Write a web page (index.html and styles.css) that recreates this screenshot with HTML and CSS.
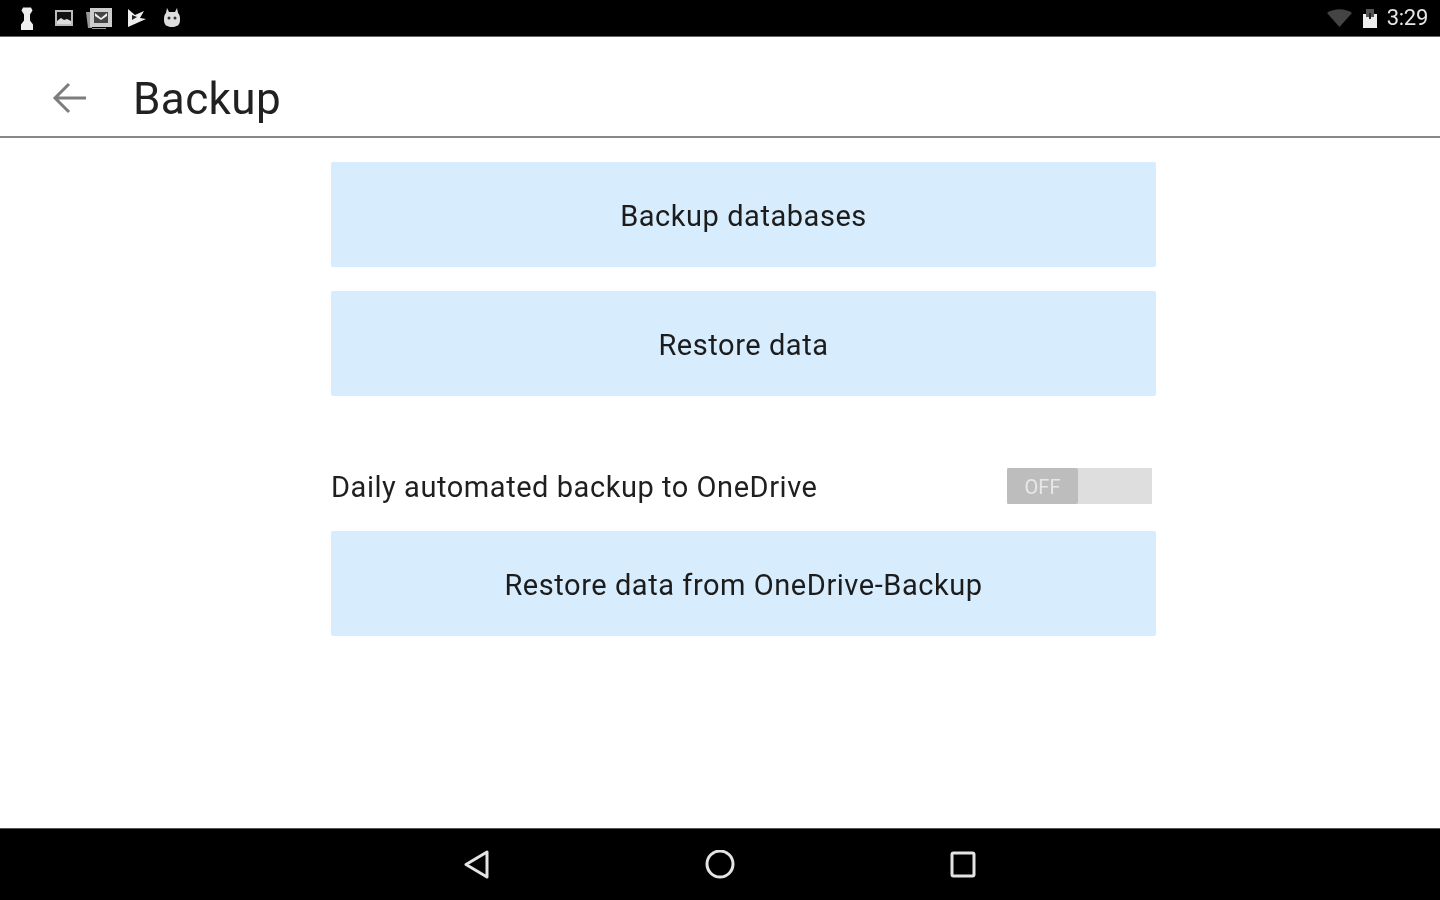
FILE: index.html
```html
<!DOCTYPE html>
<html lang="en">
<head>
<meta charset="utf-8">
<title>Backup</title>
<link rel="stylesheet" href="styles.css">
</head>
<body>
<div class="screen">
  <header class="status-bar">
    <div class="status-left">
      <svg class="ico ico-chess" width="18" height="26" viewBox="0 0 18 26"><path d="M5 2.500h8l1.500 3-2.500 4v6l3 4V25H3v-5.500l3-4v-6l-2.500-4z" fill="#eee"/></svg>
      <svg class="ico ico-pic" width="20" height="18" viewBox="0 0 20 18"><path d="M1 1h18v16H1z" fill="#bbb"/><path d="M3 3h14v9H3z" fill="#111"/><path d="M3 12l4-3 3 2 3-1 4 2v3H3z" fill="#ddd"/></svg>
      <svg class="ico ico-mail" width="28" height="24" viewBox="0 0 28 24"><path d="M1 6h6v17h14v-1H3z" fill="#999"/><path d="M5 2h22v19H5z" fill="#ccc"/><path d="M9 6h14v11H9z" fill="#444"/><path d="M10 7l6 5 6-5v3l-6 4-6-4z" fill="#eee"/></svg>
      <svg class="ico ico-play" width="20" height="20" viewBox="0 0 20 20"><path d="M1 1l7 6 9-4-4 7 6 1-18 8z" fill="#eee"/><path d="M5 7v5l5-3z" fill="#222"/></svg>
      <svg class="ico ico-bot" width="20" height="22" viewBox="0 0 20 22"><path d="M5 1l2 4h6l2-4 1 5c2 2 2 4 2 7 0 5-3 7-8 7s-8-2-8-7c0-3 0-5 2-7z" fill="#ddd"/><circle cx="7" cy="11" r="1.500" fill="#333"/><circle cx="13" cy="11" r="1.500" fill="#333"/></svg>
    </div>
    <div class="status-right">
      <svg width="27" height="20" viewBox="0 0 27 20"><path d="M1 5c7-5 18-5 25 0L13.500 19z" fill="#444"/></svg>
      <svg width="18" height="22" viewBox="0 0 18 22"><path d="M5 2h8v5h3v14H2V7h3z" fill="#eee"/><path d="M5 2h8v8H5z" fill="#555"/><path d="M8 6h2v6H8z" fill="#222"/></svg>
      <span class="clock">3:29</span>
    </div>
  </header>

  <div class="app-bar">
    <svg class="back" width="38" height="34" viewBox="0 0 38 34"><path d="M35 17H4M18 3 4 17l14 14" fill="none" stroke="#7d7d7d" stroke-width="3"/></svg>
    <h1 class="title">Backup</h1>
  </div>

  <main class="content">
    <div class="panel">
      <button class="action">Backup databases</button>
      <button class="action">Restore data</button>
      <div class="auto-row">
        <span class="auto-label">Daily automated backup to OneDrive</span>
        <div class="toggle"><span class="thumb">OFF</span></div>
      </div>
      <button class="action">Restore data from OneDrive-Backup</button>
    </div>
  </main>

  <nav class="nav-bar">
    <svg width="30" height="30" viewBox="0 0 30 30"><path d="M25 2v25L4 14.500z" fill="none" stroke="#e4e4e4" stroke-width="3" stroke-linejoin="round"/></svg>
    <svg width="30" height="30" viewBox="0 0 30 30"><circle cx="15" cy="14" r="13" fill="none" stroke="#e4e4e4" stroke-width="3"/></svg>
    <svg width="30" height="30" viewBox="0 0 30 30"><rect x="4" y="3" width="22" height="23" rx="1.500" fill="none" stroke="#e4e4e4" stroke-width="3"/></svg>
  </nav>
</div>
</body>
</html>
```

FILE: styles.css
```css
* { box-sizing: border-box; }
html, body { margin: 0; padding: 0; }
body { font-family: Roboto, "Liberation Sans", sans-serif; background: #fff; }
.screen { width: 1440px; height: 900px; display: flex; flex-direction: column; overflow: hidden; filter: blur(.6px); }
.status-bar { height: 37px; background: #000; border-bottom: 1px solid #666; display: flex; justify-content: space-between; align-items: center; padding: 0 12px 1px 18px; flex: none; }
.status-left { display: flex; align-items: center; }
.status-left .ico { display: block; }
.ico-pic { margin-left: 18px; }
.ico-mail { margin-left: 11px; }
.ico-play { margin-left: 14px; }
.ico-bot { margin-left: 15px; }
.status-right { display: flex; align-items: center; gap: 8px; }
.clock { color: #e4e4e4; font-size: 22px; letter-spacing: -.3px; }
.app-bar { height: 101px; border-bottom: 2px solid #888; display: flex; align-items: center; padding: 24px 0 0 51px; flex: none; }
.back { flex: none; margin-top: -2px; }
.title { margin: 0 0 0 44px; font-size: 44px; font-weight: 400; color: #212121; letter-spacing: .4px; }
.content { flex: 1; padding: 24px 0 0 331px; }
.panel { width: 825px; display: flex; flex-direction: column; }
.action { height: 105px; margin-bottom: 24px; border: 0; border-radius: 2px; background: #d7ecfd; color: #1c1c1c; font: 400 29px Roboto, "Liberation Sans", sans-serif; letter-spacing: .55px; padding: 2px 0 0; }
.auto-row { display: flex; justify-content: space-between; align-items: center; height: 112px; padding: 24px 4px 0 0; }
.action:nth-child(2) { margin-bottom: 23px; }
.auto-label { font-size: 29px; color: #1f1f1f; letter-spacing: .55px; }
.toggle { width: 145px; height: 36px; margin-top: -2px; background: #dedede; display: flex; }
.thumb { width: 71px; height: 36px; background: #bdbdbd; border-radius: 2px; color: #e8e8e8; font-size: 20px; text-align: center; line-height: 38px; }
.nav-bar { height: 72px; background: #000; border-top: 1px solid #555; display: flex; justify-content: center; align-items: center; gap: 213px; flex: none; }
```
